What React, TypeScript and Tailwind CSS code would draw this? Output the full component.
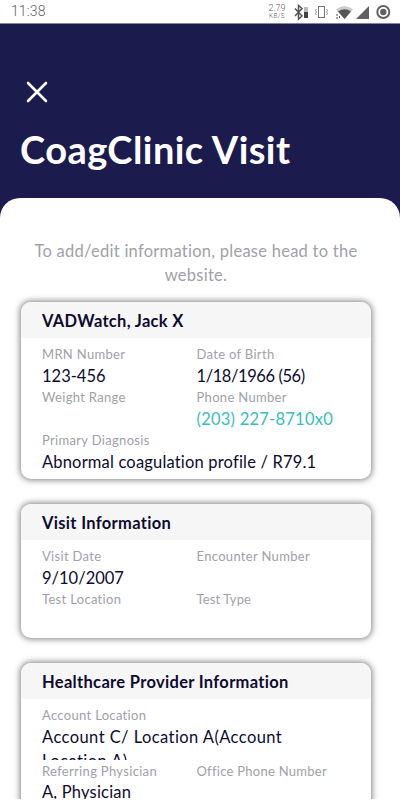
import type { ReactNode } from 'react'

type FieldProps = {
  label: string
  value?: string
  labelClass?: string
  valueClass?: string
  className?: string
}

function Field({ label, value, labelClass = 'tracking-[0.32px]', valueClass = 'text-[#0e0b2e]', className = '' }: FieldProps) {
  return (
    <div className={`h-[43.2px] whitespace-nowrap ${className}`}>
      <div className={`h-[21px] text-[13px] leading-[22px] text-[#a0a1a8] ${labelClass}`}>{label}</div>
      {value && <div className={`text-[16.5px] leading-[24px] ${valueClass}`}>{value}</div>}
    </div>
  )
}

function Card({ title, className, children }: { title: string; className: string; children: ReactNode }) {
  return (
    <section className={`w-[350px] shrink-0 overflow-hidden rounded-[10px] bg-white shadow-[0_0_6px_1px_rgba(0,0,0,0.5)] ${className}`}>
      <h2 className="h-9 bg-[#f6f6f7] pl-[21px] text-[16.5px] leading-[38px] font-bold tracking-[0.32px] whitespace-nowrap text-[#0e0b2e]">{title}</h2>
      <div className="grid grid-cols-[154.5px_1fr] pt-[5px] pl-[21px]">{children}</div>
    </section>
  )
}

function StatusBar() {
  return (
    <div className="flex h-6 shrink-0 items-center border-b border-[#85859b] bg-white pl-[11px] text-[#5f5f5f]">
      <span className="w-[257px] font-[Roboto] text-[14px] leading-[23px] font-light tracking-[0.1px]">11:38</span>
      <div className="w-[18px] text-center font-[Roboto] font-light whitespace-nowrap">
        <div className="text-[9px] leading-[9px]">2.79</div>
        <div className="text-[6.5px] leading-[6px] tracking-[0.4px]">KB/S</div>
      </div>
      <svg width="108" height="22" viewBox="0 0 108 22" fill="none">
        <path d="M9 7.500l7 7.500-3.500 3V4.500L16 7.500 9 15" stroke="#555" strokeWidth="1.500" />
        <rect x="18" y="6" width="4" height="5" fill="#bbb" />
        <rect x="18" y="11" width="4" height="6" fill="#444" />
        <rect x="32.500" y="5.500" width="6" height="11" stroke="#777" />
        <path d="M30.500 8l-1 1.500 1 1.500-1 1.500 1 1.500M40.500 8l1 1.500-1 1.500 1 1.500-1 1.500" stroke="#777" strokeWidth=".8" />
        <path d="M50 8.500Q58.500 1.500 67 8.500L58.500 18z" fill="#ccc" />
        <path d="M52 10.500q6.500-4.500 13 0L58.500 18z" fill="#555" />
        <path d="M51 13v2M51 16v2M53.500 15v2" stroke="#555" />
        <path d="M83 5V18H70z" fill="#616161" />
        <circle cx="97.300" cy="11" r="6" stroke="#616161" strokeWidth="2" />
        <circle cx="97.300" cy="11" r="3.200" fill="#616161" />
      </svg>
    </div>
  )
}

export default function App() {
  return (
    <div className="flex h-[800px] w-[400px] flex-col overflow-hidden border-b border-white bg-[#1c1b4d] font-[Lato,sans-serif]">
      <StatusBar />
      <header className="h-[174px] shrink-0 pl-5 text-white">
        <button className="mt-[57px] ml-1.5 block" aria-label="Close">
          <svg width="22" height="22" viewBox="0 0 22 22" stroke="white" strokeWidth="2.600" strokeLinecap="round">
            <path d="M2 2L20 20M20 2L2 20" />
          </svg>
        </button>
        <h1 className="mt-[22px] text-[38px] leading-[48px] font-bold tracking-[0.43px] whitespace-nowrap">CoagClinic Visit</h1>
      </header>
      <main className="flex min-h-0 flex-1 flex-col items-start overflow-hidden rounded-t-[20px] bg-white pl-[21px]">
        <p className="mt-[41px] h-12 w-[350px] text-center text-[16.5px] leading-6 tracking-[0.26px] text-[#a0a1a8]">
          To add/edit information, please head to the
          <br />
          website.
        </p>
        <Card title="VADWatch, Jack X" className="mt-[15px] h-[177px]">
          <Field label="MRN Number" value="123-456" />
          <Field label="Date of Birth" value="1/18/1966 (56)" valueClass="text-[#0e0b2e] tracking-[-0.42px]" />
          <Field label="Weight Range" />
          <Field label="Phone Number" value="(203) 227-8710x0" valueClass="text-[#38bdb8] tracking-[0.24px]" />
          <Field label="Primary Diagnosis" value="Abnormal coagulation profile / R79.1" valueClass="text-[#0e0b2e] tracking-[0.18px]" className="col-span-2" />
        </Card>
        <Card title="Visit Information" className="mt-[25px] h-[134px]">
          <Field label="Visit Date" value="9/10/2007" />
          <Field label="Encounter Number" />
          <Field label="Test Location" />
          <Field label="Test Type" labelClass="tracking-[0.1px]" />
        </Card>
        <Card title="Healthcare Provider Information" className="mt-[25px] h-[180px]">
          <div className="col-span-2 h-[55.500px] overflow-hidden">
            <div className="h-[21px] text-[13px] leading-[22px] tracking-[0.32px] text-[#a0a1a8]">Account Location</div>
            <div className="w-[265px] text-[16.5px] leading-[24px] tracking-[0.43px] text-[#0e0b2e]">Account C/ Location A(Account Location A)</div>
          </div>
          <Field label="Referring Physician" value="A, Physician" valueClass="-mt-px text-[#0e0b2e] tracking-[0.2px]" />
          <Field label="Office Phone Number" labelClass="tracking-[0.27px]" />
        </Card>
      </main>
    </div>
  )
}
